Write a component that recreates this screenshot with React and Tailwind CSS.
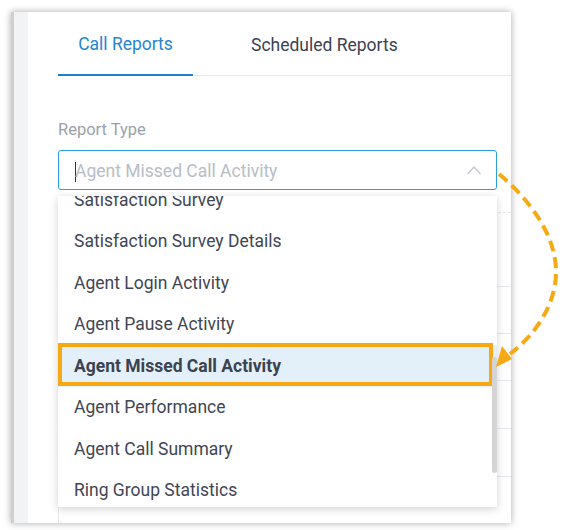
import React from 'react';

const options = [
  'Satisfaction Survey',
  'Satisfaction Survey Details',
  'Agent Login Activity',
  'Agent Pause Activity',
  'Agent Missed Call Activity',
  'Agent Performance',
  'Agent Call Summary',
  'Ring Group Statistics',
];

const selected = 'Agent Missed Call Activity';

export default function App() {
  return (
    <div className="relative w-[564px] h-[530px] overflow-hidden bg-white font-['Roboto','Liberation_Sans',sans-serif]">
      {/* Card */}
      <div className="pt-3 pl-[11px]">
        <div className="flex w-[500px] h-[511px] overflow-hidden bg-white shadow-[0_0_7px_rgba(0,0,0,0.35)]">
          {/* Left strip */}
          <div className="w-[17px] shrink-0 bg-[#f2f3f5] border-l-[3px] border-[#cfcfd1]" />

          {/* Main */}
          <div className="relative flex-1 pl-[30px]">
            {/* Tabs */}
            <div className="flex border-b border-[#e6e8ee] text-[17.5px]">
              <div className="w-[135px] h-[64px] -mb-px pt-[3px] flex items-center justify-center border-b-2 border-[#1d80cf] text-[#2586d3]">
                Call Reports
              </div>
              <div className="ml-[58px] h-[64px] -mb-px pt-[3px] flex items-center text-[#3b4252]">
                Scheduled Reports
              </div>
            </div>

            {/* Report Type */}
            <div className="mt-[44px] mb-[10px] h-5 leading-5 text-[16.5px] text-[#9aa1ac]">Report Type</div>
            <div className="relative flex items-center w-[439px] h-[40px] pt-[3px] border border-[#2a9fe0] rounded-[3px] pl-[16px] pr-3 text-[17.5px]">
              <span className="w-px h-[20px] bg-[#333] -mr-px" />
              <span className="text-[#b9bdc4]">{selected}</span>
              <svg className="ml-auto mr-[2px] -mt-[3px]" width="16" height="10" viewBox="0 0 16 10">
                <polyline points="1.5,9 8,2 14.5,9" fill="none" stroke="#c3c7cd" strokeWidth="1.4" />
              </svg>
            </div>

            {/* Table behind dropdown */}
            <div className="mt-[22px] border-t border-dashed border-[#e3e5ea]">
              <div className="h-[74px] border-b border-[#e6e8ee]" />
              <div className="h-[47px] border-b border-[#e6e8ee]" />
              <div className="h-[47px] border-b border-[#e6e8ee]" />
              <div className="h-[48px] border-b border-[#e6e8ee]" />
              <div className="h-[48px] border-b border-[#e6e8ee]" />
              <div className="h-[60px] border-l border-[#e6e8ee]" />
            </div>

            {/* Dropdown menu */}
            <div className="absolute left-[30px] top-[184px] w-[439px] h-[311px] overflow-hidden bg-white shadow-[0_2px_8px_rgba(0,0,0,0.18)]">
              <div className="mt-[-17px]">
                {options.map((o) => (
                  <div
                    key={o}
                    className={
                      o === selected
                        ? 'h-[41.5px] flex items-center pl-[16px] text-[17.5px] font-bold text-[#3b4250] bg-[#e4f0f9]'
                        : 'h-[41.5px] flex items-center pl-[16px] text-[17.5px] text-[#3f4654]'
                    }
                  >
                    {o}
                  </div>
                ))}
              </div>
              <div className="absolute left-0 top-[147px] w-[435px] h-[43px] border-4 border-[#f6a912]" />
              <div className="absolute right-0 top-[161px] w-[5px] h-[116px] rounded-full bg-[#d4d4d4]" />
            </div>
          </div>
        </div>
      </div>

      {/* Dashed arrow */}
      <svg className="absolute inset-0 pointer-events-none" width="564" height="530" viewBox="0 0 564 530">
        <path
          d="M499 174 C 530 200, 556 235, 556 272 C 556 305, 535 335, 510 354"
          fill="none"
          stroke="#f6a912"
          strokeWidth="4"
          strokeDasharray="11 6"
        />
        <polygon points="496,367 502,346 512,359" fill="#f6a912" />
      </svg>
    </div>
  );
}
